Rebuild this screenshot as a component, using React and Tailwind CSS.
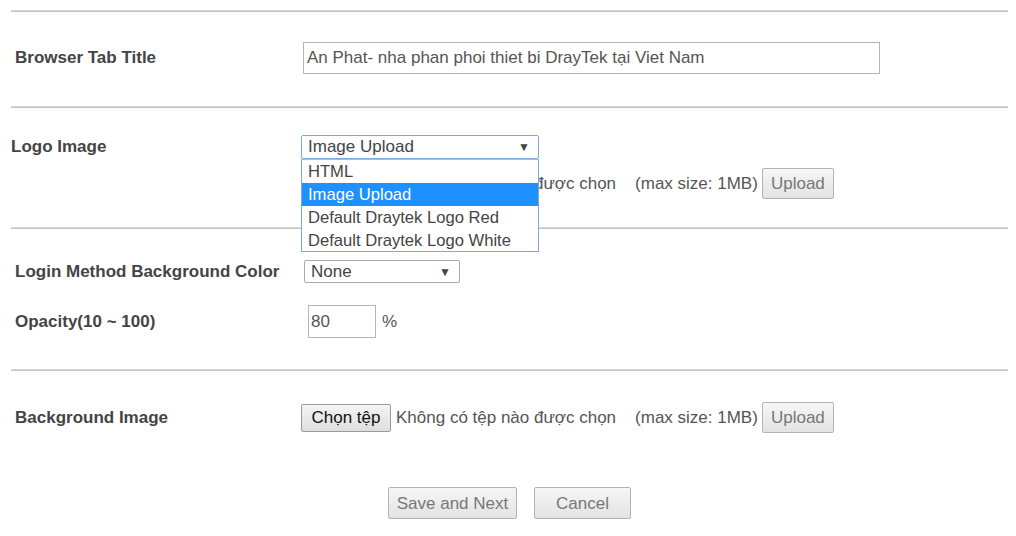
import React from "react";

const font = { fontFamily: '"Liberation Sans", Arial, sans-serif' };

const Line = () => <div className="h-[2px] bg-[#d6d6d6] border-b border-[#c4c4c4]" />;

const GrayButton = ({ children, className = "" }) => (
  <button
    className={
      "border border-[#b3b3b3] rounded-[2px] bg-gradient-to-b from-[#f6f6f6] to-[#e3e3e3] text-[#777] text-[17px] leading-none " +
      className
    }
  >
    {children}
  </button>
);

const FileRow = () => (
  <div className="flex items-center text-[17px] text-[#555]">
    <button className="h-[28px] w-[90px] border border-[#9a9a9a] rounded-[2px] bg-gradient-to-b from-[#f4f4f4] to-[#dedede] text-[#111] text-[17px] leading-none">
      Chọn tệp
    </button>
    <span className="ml-[5px]">Không có tệp nào được chọn</span>
    <span className="ml-[19px]">(max size: 1MB)</span>
    <GrayButton className="ml-[4px] h-[31px] w-[72px]">Upload</GrayButton>
  </div>
);

const Label = ({ children, className = "" }) => (
  <div className={"text-[17px] font-bold text-[#444] " + className}>{children}</div>
);

export default function App() {
  return (
    <div style={font} className="w-[1016px] h-[536px] bg-white overflow-hidden">
      <div className="pt-[10px] mx-[11px] w-[997px]">
        <Line />

        {/* browser tab title */}
        <div className="flex items-center pt-[30px] pb-[32px]">
          <Label className="w-[292px] pl-[4px]">Browser Tab Title</Label>
          <div className="w-[577px] h-[32px] border border-[#b5b5b5] flex items-center px-[3px] text-[17px] text-[#555]">
            An Phat- nha phan phoi thiet bi DrayTek tại Viet Nam
          </div>
        </div>

        <Line />

        {/* logo image */}
        <div className="pt-[27px] pb-[28px] flex">
          <Label className="w-[290px] h-[24px] flex items-center">Logo Image</Label>
          <div className="relative flex flex-col">
            <div className="w-[238px] h-[24px] border border-[#7ea6e0] rounded-[2px] flex items-center justify-between pl-[6px] pr-[8px] text-[17px] text-[#444]">
              <span>Image Upload</span>
              <span className="text-[12px] text-[#444]">▼</span>
            </div>
            <div className="mt-[9px]">
              <FileRow />
            </div>
            <div className="absolute left-0 top-[24px] w-[238px] bg-white border border-[#7ea6e0] border-t-[#bbb] text-[16.6px] text-[#444] leading-[23px] z-10">
              <div className="pl-[6px] h-[23px]">HTML</div>
              <div className="pl-[6px] h-[23px] bg-[#1e90ff] text-white">Image Upload</div>
              <div className="pl-[6px] h-[23px]">Default Draytek Logo Red</div>
              <div className="pl-[6px] h-[22px]">Default Draytek Logo White</div>
            </div>
          </div>
        </div>

        <Line />

        {/* login method */}
        <div className="pt-[31px] pb-[31px] flex flex-col gap-[22px]">
          <div className="flex items-center h-[23px]">
            <Label className="w-[293px] pl-[4px]">Login Method Background Color</Label>
            <div className="w-[156px] h-[23px] border border-[#aaa] rounded-[2px] flex items-center justify-between pl-[6px] pr-[8px] text-[17px] text-[#444]">
              <span>None</span>
              <span className="text-[12px]">▼</span>
            </div>
          </div>
          <div className="flex items-center h-[33px]">
            <Label className="w-[297px] pl-[4px]">Opacity(10 ~ 100)</Label>
            <div className="w-[68px] h-[33px] border border-[#b5b5b5] flex items-center px-[2px] text-[17px] text-[#555]">
              80
            </div>
            <span className="ml-[6px] text-[17px] text-[#555]">%</span>
          </div>
        </div>

        <Line />

        {/* background image */}
        <div className="pt-[31px] flex items-center">
          <Label className="w-[290px] pl-[4px]">Background Image</Label>
          <FileRow />
        </div>

        <div className="mt-[54px] flex justify-center gap-[17px]">
          <GrayButton className="h-[32px] w-[129px] text-[#777]">Save and Next</GrayButton>
          <GrayButton className="h-[32px] w-[97px] text-[#777]">Cancel</GrayButton>
        </div>
      </div>
    </div>
  );
}
